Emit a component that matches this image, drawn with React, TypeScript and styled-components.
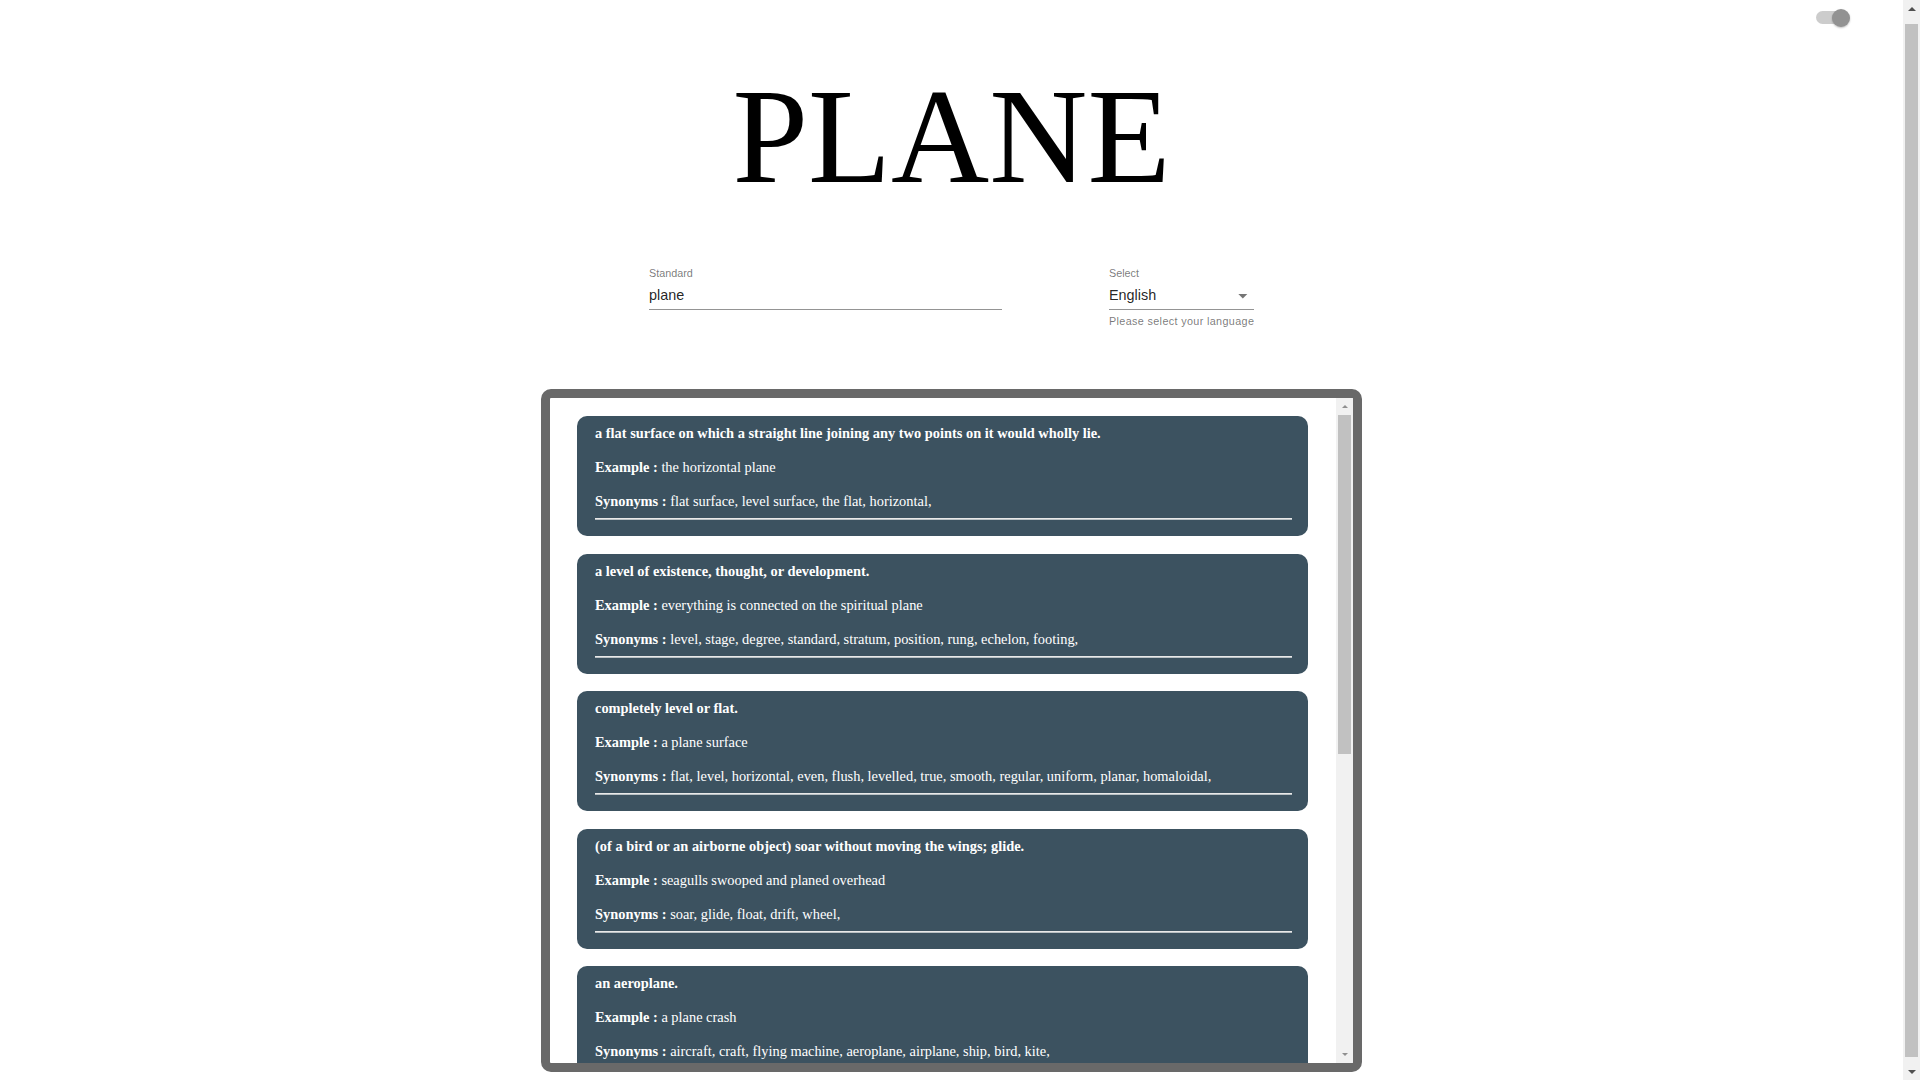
import React from "react";
import styled, { createGlobalStyle } from "styled-components";

const GlobalStyle = createGlobalStyle`
  body {
    margin: 0;
    overflow: hidden;
    background: #ffffff;
    font-family: "Liberation Sans", Arial, sans-serif;
  }
`;

const Shell = styled.div`
  display: flex;
  height: 100vh;
`;

const Main = styled.main`
  flex: 1;
  min-width: 0;
  overflow: hidden;
  display: flex;
  flex-direction: column;
  align-items: center;
`;

/* scrollbars drawn by hand, since the browser hides its own */
const ScrollBar = styled.div`
  flex: 0 0 17px;
  display: flex;
  flex-direction: column;
  background: #f1f1f1;
`;

const ScrollButton = styled.div`
  height: 17px;
  flex: 0 0 17px;
  display: flex;
  align-items: center;
  justify-content: center;
`;

const ScrollRail = styled.div`
  flex: 1;
  display: flex;
  flex-direction: column;
  padding: 0 2px;
`;

const ScrollThumb = styled.div<{ $offset: number; $size: number }>`
  margin-top: ${(p) => p.$offset}px;
  height: ${(p) => p.$size}px;
  background: #c1c1c1;
`;

const Arrow = ({ up, inner }: { up?: boolean; inner?: boolean }) => {
  const w = inner ? 6 : 8;
  const h = inner ? 3 : 4;
  const points = up ? `0,${h} ${w / 2},0 ${w},${h}` : `0,0 ${w / 2},${h} ${w},0`;
  return (
    <svg width={w} height={h} viewBox={`0 0 ${w} ${h}`}>
      <polygon points={points} fill={inner ? "#8f8f8f" : "#505050"} />
    </svg>
  );
};

const TopBar = styled.header`
  align-self: stretch;
  height: 35px;
  flex: 0 0 35px;
  display: flex;
  align-items: center;
  justify-content: flex-end;
  padding-right: 53px;
`;

const SwitchRoot = styled.div`
  position: relative;
  width: 34px;
  height: 18px;
  display: flex;
  align-items: center;
  cursor: pointer;
`;

const SwitchTrack = styled.div`
  width: 30px;
  height: 13px;
  border-radius: 7px;
  background: #cccccc;
`;

const SwitchThumb = styled.div`
  position: absolute;
  top: 0;
  right: 0;
  width: 18px;
  height: 18px;
  border-radius: 50%;
  background: #929292;
  box-shadow: 0 1px 2px rgba(0, 0, 0, 0.25);
`;

const Title = styled.h1`
  margin: 26px 0 0;
  font-family: "Liberation Serif", "Times New Roman", serif;
  font-weight: 400;
  font-size: 136px;
  line-height: 150px;
  color: #000;
`;

const FormRow = styled.div`
  margin-top: 56px;
  display: flex;
  align-items: flex-start;
  gap: 107px;
`;

const Field = styled.div<{ $width: number }>`
  width: ${(p) => p.$width}px;
  display: flex;
  flex-direction: column;
`;

const FieldLabel = styled.label`
  font-size: 10.8px;
  line-height: 13px;
  color: rgba(0, 0, 0, 0.54);
`;

const InputBox = styled.div`
  margin-top: 7px;
  height: 22px;
  display: flex;
  align-items: flex-start;
  justify-content: space-between;
  border-bottom: 1px solid rgba(0, 0, 0, 0.42);
`;

const TextInput = styled.input`
  width: 100%;
  padding: 0;
  border: none;
  outline: none;
  background: transparent;
  font-family: "Liberation Sans", Arial, sans-serif;
  font-size: 14.4px;
  line-height: 17px;
  height: 17px;
  color: rgba(0, 0, 0, 0.87);
`;

const SelectValue = styled.span`
  font-size: 14.4px;
  line-height: 17px;
  color: rgba(0, 0, 0, 0.87);
`;

const ArrowIcon = styled.svg`
  width: 21.6px;
  height: 21.6px;
  margin-top: -2px;
  fill: rgba(0, 0, 0, 0.54);
`;

const HelperText = styled.p`
  margin: 5px 0 0;
  font-size: 10.8px;
  line-height: 13px;
  letter-spacing: 0.033em;
  color: rgba(0, 0, 0, 0.54);
  white-space: nowrap;
`;

const ResultBox = styled.section`
  margin-top: 61px;
  box-sizing: border-box;
  width: 821px;
  height: 683px;
  flex: 0 0 683px;
  border: 9px solid dimgray;
  border-radius: 10px;
  display: flex;
  overflow: hidden;
  background: #fff;
`;

const CardViewport = styled.div`
  flex: 1;
  min-width: 0;
  overflow-y: auto;
  scrollbar-width: none;
  &::-webkit-scrollbar {
    display: none;
  }
`;

const CardList = styled.div`
  display: flex;
  flex-direction: column;
  gap: 17.5px;
  padding: 18px 28px 17px 27px;
`;

const Card = styled.article`
  background: #3c5260;
  border-radius: 10px;
  color: #ffffff;
  font-family: "Liberation Serif", "Times New Roman", serif;
  font-size: 14.4px;
  padding: 0 16px 16px 18px;
`;

const Line = styled.div<{ $bold?: boolean }>`
  line-height: 34px;
  font-weight: ${(p) => (p.$bold ? 700 : 400)};
`;

const Divider = styled.hr`
  margin: 0;
  height: 0;
  border: none;
  border-top: 1px solid #e9e9e9;
  border-bottom: 1px solid #b9c0c4;
`;

interface Meaning {
  definition: string;
  example: string;
  synonyms: string[];
}

const meanings: Meaning[] = [
  {
    definition:
      "a flat surface on which a straight line joining any two points on it would wholly lie.",
    example: "the horizontal plane",
    synonyms: ["flat surface", "level surface", "the flat", "horizontal"],
  },
  {
    definition: "a level of existence, thought, or development.",
    example: "everything is connected on the spiritual plane",
    synonyms: [
      "level",
      "stage",
      "degree",
      "standard",
      "stratum",
      "position",
      "rung",
      "echelon",
      "footing",
    ],
  },
  {
    definition: "completely level or flat.",
    example: "a plane surface",
    synonyms: [
      "flat",
      "level",
      "horizontal",
      "even",
      "flush",
      "levelled",
      "true",
      "smooth",
      "regular",
      "uniform",
      "planar",
      "homaloidal",
    ],
  },
  {
    definition:
      "(of a bird or an airborne object) soar without moving the wings; glide.",
    example: "seagulls swooped and planed overhead",
    synonyms: ["soar", "glide", "float", "drift", "wheel"],
  },
  {
    definition: "an aeroplane.",
    example: "a plane crash",
    synonyms: [
      "aircraft",
      "craft",
      "flying machine",
      "aeroplane",
      "airplane",
      "ship",
      "bird",
      "kite",
    ],
  },
  {
    definition: "travel in an aircraft.",
    example: "they planed to Paris for the weekend",
    synonyms: ["fly", "jet", "travel by air"],
  },
  {
    definition: "reduce the size or thickness of (a piece of wood or metal) with a plane.",
    example: "the edges of the boards had been planed",
    synonyms: ["smooth", "level", "shave", "pare"],
  },
  {
    definition: "a plane tree.",
    example: "the square was lined with old planes",
    synonyms: ["sycamore", "platan"],
  },
];

const MeaningCard = ({ meaning }: { meaning: Meaning }) => (
  <Card>
    <Line $bold>{meaning.definition}</Line>
    <Line>
      <b>Example :</b> {meaning.example}
    </Line>
    <Line>
      <b>Synonyms :</b> {meaning.synonyms.map((s) => `${s}, `).join("")}
    </Line>
    <Divider />
  </Card>
);

export default function App() {
  return (
    <>
      <GlobalStyle />
      <Shell>
        <Main>
          <TopBar>
            <SwitchRoot>
              <SwitchTrack />
              <SwitchThumb />
            </SwitchRoot>
          </TopBar>
          <Title>PLANE</Title>
          <FormRow>
            <Field $width={353}>
              <FieldLabel>Standard</FieldLabel>
              <InputBox>
                <TextInput defaultValue="plane" />
              </InputBox>
            </Field>
            <Field $width={145}>
              <FieldLabel>Select</FieldLabel>
              <InputBox>
                <SelectValue>English</SelectValue>
                <ArrowIcon viewBox="0 0 24 24">
                  <path d="M7 10l5 5 5-5z" />
                </ArrowIcon>
              </InputBox>
              <HelperText>Please select your language</HelperText>
            </Field>
          </FormRow>
          <ResultBox>
            <CardViewport>
              <CardList>
                {meanings.map((m, i) => (
                  <MeaningCard key={i} meaning={m} />
                ))}
              </CardList>
            </CardViewport>
            <ScrollBar>
              <ScrollButton>
                <Arrow up inner />
              </ScrollButton>
              <ScrollRail>
                <ScrollThumb $offset={0} $size={339} />
              </ScrollRail>
              <ScrollButton>
                <Arrow inner />
              </ScrollButton>
            </ScrollBar>
          </ResultBox>
        </Main>
        <ScrollBar>
          <ScrollButton>
            <Arrow up />
          </ScrollButton>
          <ScrollRail>
            <ScrollThumb $offset={7} $size={1033} />
          </ScrollRail>
          <ScrollButton>
            <Arrow />
          </ScrollButton>
        </ScrollBar>
      </Shell>
    </>
  );
}
